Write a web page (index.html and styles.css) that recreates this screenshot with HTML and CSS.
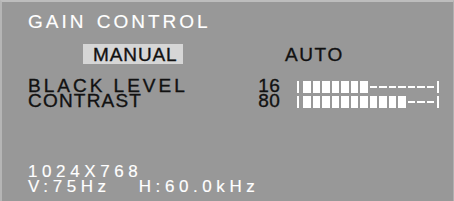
FILE: index.html
```html
<!DOCTYPE html>
<html lang="en">

<head>
    <meta charset="UTF-8">
    <meta name="viewport" content="width=device-width, initial-scale=1.0">
    <title>Gain Control</title>

    <link rel="stylesheet" href="styles.css">
</head>

<body>
    <main class="osd">
        <h1 class="title">GAIN CONTROL</h1>
        <section class="modes">
            <span class="mode active">MANUAL</span>
            <span class="mode">AUTO</span>
        </section>
        <section class="levels">
            <div class="row">
                <span class="label">BLACK LEVEL</span>
                <span class="value">16</span>
                <div class="bar">
                    <i class="seg on"></i><i class="seg on"></i><i class="seg on"></i><i class="seg on"></i><i class="seg on"></i><i class="seg on"></i><i class="seg on"></i><i class="seg"></i><i class="seg"></i><i class="seg"></i><i class="seg"></i><i class="seg"></i><i class="seg"></i><i class="seg"></i>
                </div>
            </div>
            <div class="row">
                <span class="label narrow">CONTRAST</span>
                <span class="value">80</span>
                <div class="bar">
                    <i class="seg on"></i><i class="seg on"></i><i class="seg on"></i><i class="seg on"></i><i class="seg on"></i><i class="seg on"></i><i class="seg on"></i><i class="seg on"></i><i class="seg on"></i><i class="seg on"></i><i class="seg on"></i><i class="seg"></i><i class="seg"></i><i class="seg"></i>
                </div>
            </div>
        </section>
        <footer class="timing">
            <p>1024X768</p>
            <p>V:75Hz&nbsp;&nbsp;&nbsp;H:60.0kHz</p>
        </footer>
    </main>
</body>

</html>
```

FILE: styles.css
```css
* {
    padding: 0;
    margin: 0;
    box-sizing: border-box;
    font-family: "Liberation Sans", Arial, sans-serif;
    font-weight: normal;
}

body {
    width: 454px;
    height: 201px;
    overflow: hidden;
}

.osd {
    width: 100%;
    height: 100%;
    background-color: #989898;
    border-top: 2px solid #bdbdbd;
    border-left: 2px solid #b5b5b5;
    border-right: 1px solid #b0b0b0;
    padding: 10px 0 0 26px;
    display: flex;
    flex-direction: column;
    -webkit-text-stroke: 0.35px currentColor;
}

.title {
    color: white;
    font-size: 19px;
    line-height: 20px;
    letter-spacing: 3px;
    word-spacing: 2px;
    -webkit-text-stroke: 0.15px currentColor;
}

.modes {
    margin-top: 12px;
    display: flex;
    height: 20px;
}

.mode {
    color: #111;
    font-size: 19px;
    line-height: 21px;
    letter-spacing: 0.9px;
}

.mode.active {
    margin-left: 55px;
    width: 100px;
    padding-left: 10px;
    background-color: #d6d6d6;
}

.mode:last-child {
    margin-left: 102px;
    letter-spacing: 1.6px;
}

.levels {
    margin-top: 14px;
    display: flex;
    flex-direction: column;
}

.row {
    display: flex;
    align-items: center;
    height: 15px;
}

.label {
    width: 214px;
    color: #111;
    font-size: 19px;
    line-height: 15px;
    letter-spacing: 3px;
}

.label.narrow {
    letter-spacing: 1.2px;
}

.value {
    width: 38px;
    text-align: right;
    color: #111;
    font-size: 19px;
    line-height: 15px;
    letter-spacing: 0.3px;
}

.bar {
    margin-left: 17px;
    display: flex;
    align-items: center;
    gap: 2px;
    height: 12px;
    margin-top: 3px;
    border-left: 2px solid white;
    border-right: 2px solid white;
    padding: 0 3px 0 4px;
}

.seg {
    display: block;
    width: 7.5px;
    height: 2px;
    background-color: white;
}

.seg.on {
    height: 12px;
}

.timing {
    margin-top: auto;
    margin-bottom: 7px;
    color: white;
    font-size: 17px;
    line-height: 15px;
    letter-spacing: 4.6px;
    -webkit-text-stroke: 0.15px currentColor;
}
```
